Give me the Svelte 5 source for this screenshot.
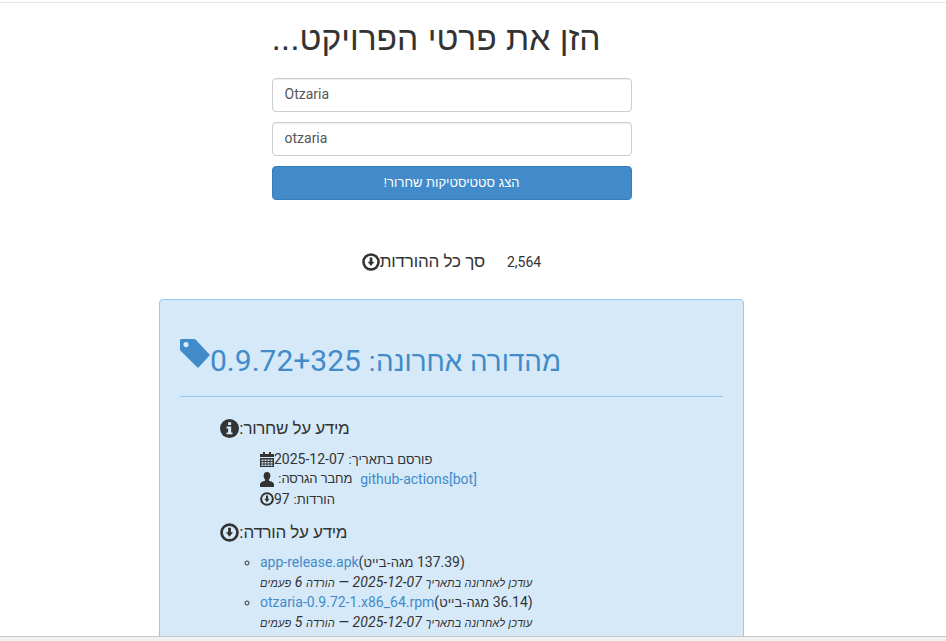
<script lang="ts">
	const assets = [
		{ name: 'app-release.apk', size: '137.39', date: '2025-12-07', count: 6 },
		{ name: 'otzaria-0.9.72-1.x86_64.rpm', size: '36.14', date: '2025-12-07', count: 5 }
	];
</script>

{#snippet downloadIcon(size: number)}
	<svg class="icon" width={size} height={size} viewBox="0 0 16 16" aria-hidden="true">
		<circle cx="8" cy="8" r="6.7" fill="none" stroke="currentColor" stroke-width="2.3" />
		<path d="M6.800 4h2.400v3.800H11L8 11.600 5 7.800h1.800z" fill="currentColor" />
	</svg>
{/snippet}

<div class="topline"></div>

<div class="page">
	<form class="project-form" onsubmit={(e) => e.preventDefault()}>
		<h2 dir="rtl">הזן את פרטי הפרויקט...</h2>
		<input type="text" value="Otzaria" />
		<input type="text" value="otzaria" />
		<button type="submit" dir="rtl">הצג סטטיסטיקות שחרור!</button>
	</form>

	<div class="total">
		{@render downloadIcon(18)}
		<span class="total-label" dir="rtl">סך כל ההורדות</span>
		<span class="total-num">2,564</span>
	</div>

	<section class="card">
		<h3 class="release-title">
			<svg class="tag" width="30" height="31" viewBox="0 0 30 31" aria-hidden="true">
				<path fill-rule="evenodd" d="M0 2.500C0 1.600.6 1 1.500 1H14c.8 0 1.300.3 1.800.8L30 17 18 30 .8 13C.3 12.500 0 12 0 11.200zM6 4a2.600 2.600 0 1 0 .01 0z" fill="currentColor" />
			</svg>
			<span dir="rtl"><span class="he">מהדורה אחרונה:</span> <bdi dir="ltr">0.9.72+325</bdi></span>
		</h3>
		<hr />

		<div class="block">
			<h4>
				<svg class="icon" width="19" height="19" viewBox="0 0 16 16" aria-hidden="true">
					<circle cx="8" cy="8" r="8" fill="currentColor" />
					<path d="M6.800 2.800h2.600v2.300H6.800zM5.500 6.300h3.900v5h1.100v1.600H5.500v-1.600h1.300V7.900H5.500z" fill="#d6e9f8" />
				</svg>
				<span dir="rtl">מידע על שחרור:</span>
			</h4>
			<div class="meta">
				<div class="row">
					<svg class="icon" width="14" height="15" viewBox="0 0 14 15" aria-hidden="true">
						<path d="M0 2h14v3H0zM3 0h2v2H3zM9 0h2v2H9z" fill="currentColor" />
						<path fill-rule="evenodd" d="M0 6h14v9H0zM1.500 7.500V9h2V7.500zM4.500 7.500V9h2V7.500zM7.500 7.500V9h2V7.500zM10.500 7.500V9h2V7.500zM1.500 10v1.500h2V10zM4.500 10v1.500h2V10zM7.500 10v1.500h2V10zM10.500 10v1.500h2V10zM1.500 12.500V14h2v-1.500zM4.500 12.500V14h2v-1.500zM7.500 12.500V14h2v-1.500zM10.500 12.500V14h2v-1.500z" fill="currentColor" />
					</svg>
					<span dir="rtl"><span class="he">פורסם בתאריך:</span> 2025-12-07</span>
				</div>
				<div class="row">
					<svg class="icon" width="14" height="15" viewBox="0 0 14 15" aria-hidden="true">
						<path d="M7 0c2.200 0 3.400 1.600 3.400 3.800 0 1.500-.6 2.800-1.400 3.600v1.300c2 .6 5 1.600 5 3.600V15H0v-2.700c0-2 3-3 5-3.600V7.400C4.200 6.600 3.600 5.300 3.600 3.800 3.600 1.600 4.800 0 7 0z" fill="currentColor" />
					</svg>
					<span class="he author-label" dir="rtl">מחבר הגרסה:</span>
					<a href="#author">github-actions[bot]</a>
				</div>
				<div class="row">
					{@render downloadIcon(14)}
					<span dir="rtl"><span class="he">הורדות:</span> 97</span>
				</div>
			</div>
		</div>

		<div class="block">
			<h4>
				{@render downloadIcon(19)}
				<span dir="rtl">מידע על הורדה:</span>
			</h4>
			<ul>
				{#each assets as a}
					<li>
						<div class="line"><a href="#asset">{a.name}</a><span dir="rtl">({a.size} <span class="he">מגה-בייט</span>)</span></div>
						<em class="line" dir="rtl"><span class="he-small">עודכן לאחרונה בתאריך</span> {a.date} — <span class="he-small">הורדה</span> {a.count} <span class="he-small">פעמים</span></em>
					</li>
				{/each}
			</ul>
		</div>
	</section>
</div>

<div class="bottombar"></div>

<style>
	:global(body) {
		margin: 0;
		background: #fff;
		overflow: hidden;
	}
	.topline {
		height: 2px;
		border-bottom: 1px solid #e5e5e5;
	}
	.page {
		width: 903px;
		height: 638px;
		overflow: hidden;
		font-family: Roboto, "Liberation Sans", sans-serif;
		font-size: 14px;
		line-height: 20px;
		color: #333;
	}
	.project-form {
		width: 360px;
		margin: 0 auto;
		display: flex;
		flex-direction: column;
	}
	h2 {
		margin: 18px 0 21px;
		font-size: 33.6px;
		line-height: 36px;
		font-weight: 400;
		font-family: "Liberation Sans", sans-serif;
		align-self: flex-start;
	}
	input {
		box-sizing: border-box;
		height: 34px;
		margin-bottom: 10px;
		padding: 5px 12px 7px;
		border: 1px solid #ccc;
		border-radius: 4px;
		font: 14px/20px Roboto, sans-serif;
		color: #555;
		box-shadow: inset 0 1px 1px rgba(0, 0, 0, 0.075);
	}
	button {
		height: 34px;
		border: 1px solid #357ebd;
		border-radius: 4px;
		background: #428bca;
		color: #fff;
		font: 13px/20px "Liberation Sans", sans-serif;
	}
	.total {
		display: flex;
		justify-content: center;
		align-items: center;
		margin-top: 50px;
		height: 24px;
	}
	.total-label {
		font-family: "Liberation Sans", sans-serif;
		font-size: 17px;
		letter-spacing: -0.2px;
		margin-right: 22px;
	}
	.card {
		box-sizing: border-box;
		width: 585px;
		height: 400px;
		margin: 25px auto 0;
		padding: 20px;
		border: 1px solid #97c8ee;
		border-radius: 4px;
		background: #d6e9f8;
	}
	.release-title {
		display: flex;
		margin: 24px 0 0;
		color: #428bca;
		font-size: 30px;
		line-height: 33px;
		font-weight: 400;
	}
	.release-title .he {
		font-size: 27.800px;
		font-family: "Liberation Sans", sans-serif;
	}
	.tag {
		margin-top: -6px;
	}
	hr {
		margin: 18px 0 22px;
		border: 0;
		border-top: 1px solid #93c9f0;
	}
	.block {
		padding-left: 40px;
	}
	h4 {
		display: flex;
		align-items: flex-start;
		margin: 0 0 10px;
		font-size: 17px;
		letter-spacing: -0.3px;
		line-height: 20px;
		font-weight: 400;
		font-family: "Liberation Sans", sans-serif;
	}
	.meta {
		padding-left: 40px;
		margin-bottom: 14px;
	}
	.row {
		display: flex;
		align-items: center;
		height: 20px;
	}
	.he {
		font-size: 13px;
		font-family: "Liberation Sans", sans-serif;
	}
	.he-small {
		font-size: 11px;
		font-family: "Liberation Sans", sans-serif;
	}
	.author-label {
		margin: 0 8px 0 4px;
		letter-spacing: -0.2px;
	}
	a {
		color: #428bca;
		text-decoration: none;
	}
	ul {
		margin: -1px 0 0;
		padding-left: 40px;
		list-style: circle;
	}
	.line {
		display: block;
		height: 20px;
		line-height: 20px;
	}
	em {
		text-align: left;
		font-style: italic;
		letter-spacing: 0.08px;
	}
	.icon {
		flex: none;
	}
	.bottombar {
		position: fixed;
		left: 0;
		right: 0;
		bottom: 0;
		height: 4px;
		border-top: 1px solid #c8c8c8;
		background: #f0f0f0;
	}
</style>
